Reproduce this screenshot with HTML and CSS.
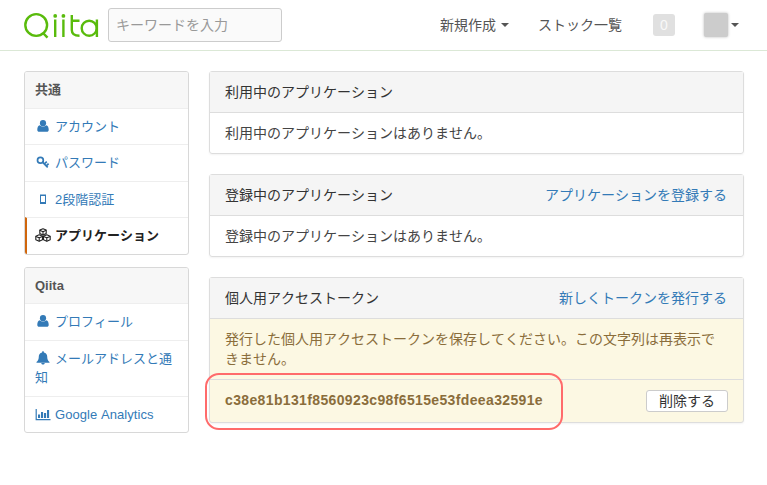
FILE: index.html
```html
<!DOCTYPE html>
<html lang="ja">
<head>
<meta charset="utf-8">
<title>Qiita</title>
<link rel="stylesheet" href="styles.css">
</head>
<body>
<svg class="sprite" aria-hidden="true">
  <symbol id="user" viewBox="0 0 12 12"><circle cx="6" cy="3.200" r="3.100"/><path d="M2.900 5.200C1 5.600.3 7.500.3 9.700c0 1.400.7 2.100 1.900 2.100h7.600c1.200 0 1.900-.7 1.900-2.100 0-2.200-.7-4.100-2.600-4.500C8 6.900 4 6.900 2.900 5.200z"/></symbol>
</svg>
<header class="header">
  <a class="logo" aria-label="Qiita">
    <svg width="78" height="30" viewBox="0 0 78 30">
      <circle cx="13.200" cy="13" r="10.900"/>
      <line x1="20" y1="21" x2="24.500" y2="25.700"/>
      <line x1="32.200" y1="7.500" x2="32.200" y2="25"/>
      <line x1="40.400" y1="7.500" x2="40.400" y2="25"/>
      <circle class="dot" cx="32.200" cy="3.900" r="1.900"/>
      <circle class="dot" cx="40.400" cy="3.900" r="1.900"/>
      <path d="M48.800 3V18Q48.800 23.700 56.500 23.700M48.800 8.700H56.500"/>
      <circle cx="66.200" cy="16.200" r="7.500"/>
      <line x1="73.900" y1="7.500" x2="73.900" y2="25"/>
    </svg>
  </a>
  <div class="search">キーワードを入力</div>
  <nav class="nav">
    <a class="create">新規作成<i class="caret"></i></a>
    <a class="stock">ストック一覧</a>
    <span class="count">0</span>
    <a class="account"><span class="avatar"></span><i class="caret"></i></a>
  </nav>
</header>
<div class="page">
  <aside class="sidebar">
    <section class="menu">
      <h2 class="menu-title tall">共通</h2>
      <a class="item short"><svg class="icon" viewBox="-2 -1 16 14"><use href="#user" width="12" height="12"/></svg>アカウント</a>
      <a class="item"><svg class="icon" viewBox="0 0 16 14"><g fill="none" stroke="currentColor" stroke-width="1.700"><circle cx="5.400" cy="5.200" r="2.900"/><path d="M7.500 7.100L12.700 12.300M9.300 8.900l2.500-2.300M11.300 10.900l2.300-2.300"/></g></svg>パスワード</a>
      <a class="item short"><svg class="icon" viewBox="0 0 16 14"><path fill-rule="evenodd" d="M5 2.500h6v9.500H5zM6 4v6h4V4z"/></svg>2段階認証</a>
      <a class="item active"><svg class="icon" viewBox="0 0 16 14"><g fill="#fff" stroke="currentColor" stroke-width="1.100" stroke-linejoin="round"><path d="M8 .8l3.200 1.300v3.500L8 7 4.800 5.600V2.100zM4.200 6.800l3.300 1.400v3.600l-3.300 1.400-3.400-1.400V8.200zM11.800 6.800l3.400 1.400v3.600l-3.400 1.400-3.300-1.400V8.200z"/><path fill="none" d="M4.800 2.300L8 3.700l3.200-1.400M8 3.700V7M.8 8.400l3.400 1.400 3.300-1.400M4.200 9.800v3.400M8.500 8.400l3.300 1.400 3.400-1.400M11.800 9.800v3.400"/></g></svg>アプリケーション</a>
    </section>
    <section class="menu">
      <h2 class="menu-title">Qiita</h2>
      <a class="item"><svg class="icon" viewBox="-2 -1 16 14"><use href="#user" width="12" height="12"/></svg>プロフィール</a>
      <a class="item two-line"><svg class="icon" viewBox="0 0 16 14"><path d="M8 .3c.7 0 1 .5.900 1.100 2.200.5 3.300 2.200 3.300 4.100 0 2.700.7 4.300 2.300 5.500v.8H1.500V11c1.600-1.200 2.300-2.800 2.300-5.500 0-1.900 1.100-3.600 3.300-4.100C7 .8 7.300.3 8 .3zM6.300 12h3.400c0 2-3.400 2-3.400 0z"/></svg>メールアドレスと通知</a>
      <a class="item short"><svg class="icon" viewBox="0 0 16 14"><path d="M.6 2h1.200v10h13.700v1.200H.6zM3 7.500h2.100V11H3zM6 5h2.100v6H6zM9 6h2.100v5H9zM12 3h2.100v8H12z"/></svg><span class="latin">Google Analytics</span></a>
    </section>
  </aside>
  <main class="main">
    <section class="panel">
      <div class="panel-head">利用中のアプリケーション</div>
      <div class="panel-body">利用中のアプリケーションはありません。</div>
    </section>
    <section class="panel">
      <div class="panel-head">登録中のアプリケーション<a>アプリケーションを登録する</a></div>
      <div class="panel-body">登録中のアプリケーションはありません。</div>
    </section>
    <section class="panel warning">
      <div class="panel-head">個人用アクセストークン<a>新しくトークンを発行する</a></div>
      <div class="notice">発行した個人用アクセストークンを保存してください。この文字列は再表示できません。</div>
      <div class="token-row"><strong class="token">c38e81b131f8560923c98f6515e53fdeea32591e</strong><button class="delete">削除する</button>
        <span class="highlight"></span>
      </div>
    </section>
  </main>
</div>
</body>
</html>
```
FILE: styles.css
```css
* { box-sizing: border-box; }
body {
  margin: 0;
  height: 485px;
  background: #fff;
  color: #444;
  font: 14px/20px "Liberation Sans", "Noto Sans CJK JP", sans-serif;
  font-kerning: none;
}
a { color: #337ab7; text-decoration: none; }
.sprite { display: none; }
.header {
  display: flex;
  height: 51px;
  padding: 8px 28px 0 23px;
  border-bottom: 1px solid #dbe8d6;
}
.logo { width: 85px; padding-top: 4px; }
.logo svg { display: block; fill: none; stroke: #59bb0c; stroke-width: 2.4; }
.logo .dot { fill: #59bb0c; stroke: none; }
.search {
  width: 174px;
  height: 34px;
  padding: 6px 7px;
  border: 1px solid #ccc;
  border-radius: 3px;
  background: #fafafa;
  color: #999;
}
.nav { display: flex; flex: 1; justify-content: flex-end; align-items: center; height: 34px; }
.nav a { display: flex; align-items: center; color: #555; }
.create { margin-right: 29px; }
.stock { margin-right: 31px; }
.caret {
  margin-left: 5px;
  border: 4px solid transparent;
  border-top-color: #555;
  border-bottom: 0;
}
.count {
  width: 22px;
  height: 22px;
  margin-right: 29px;
  border-radius: 3px;
  background: #e0e0e0;
  color: #f8f8f8;
  line-height: 22px;
  text-align: center;
}
.avatar { width: 24px; height: 24px; background: #ccc; border-radius: 2px; box-shadow: 0 0 3px #bbb; }
.account .caret { margin-left: 3px; }
.page { display: flex; gap: 20px; padding: 20px 23px 0 24px; }
.sidebar { width: 165px; }
.menu {
  margin-bottom: 12px;
  border: 1px solid #d8d8d8;
  border-radius: 3px;
  overflow: hidden;
  font-size: 13px;
  line-height: 19px;
}
.menu-title { height: 35px; margin: 0; padding: 8px 10px; background: #f7f7f7; color: #555; font-size: 13px; line-height: 19px; }
.menu-title.tall { height: 36px; }
.item { display: block; height: 37px; padding: 8px 10px 0; border-top: 1px solid #eee; }
.item.short { height: 36px; }
.item.two-line { height: 56px; }
.item.active { padding-left: 8px; border-left: 2px solid #d0660c; color: #222; font-weight: bold; }
.icon { width: 16px; height: 14px; margin-right: 4px; vertical-align: -2px; fill: currentColor; }
.latin { letter-spacing: .06px; }
.main { flex: 1; }
.panel { margin-bottom: 20px; border: 1px solid #ddd; border-radius: 3px; box-shadow: 0 1px 2px #0000000d; }
.panel-head {
  display: flex;
  justify-content: space-between;
  height: 41px;
  padding: 10px 16px 10px 15px;
  border-bottom: 1px solid #ddd;
  background: #f5f5f5;
  color: #333;
}
.panel-body { height: 40px; padding: 10px 15px; }
.warning { background: #fcf8e3; color: #8a6d3b; }
.notice { height: 60px; padding: 10px 15px; }
.token-row {
  position: relative;
  display: flex;
  justify-content: space-between;
  align-items: center;
  height: 43px;
  padding: 0 15px;
  border-top: 1px solid #ddd;
}
.token { position: relative; top: -1px; letter-spacing: .36px; }
.delete {
  width: 82px;
  height: 22px;
  padding: 0;
  border: 1px solid #ccc;
  border-radius: 3px;
  background: #fff;
  color: #333;
  font: inherit;
  line-height: 18px;
}
.highlight {
  position: absolute;
  left: -5px;
  top: -7px;
  width: 358px;
  height: 57px;
  border: 2px solid #ff6b6b;
  border-radius: 14px;
}
```
